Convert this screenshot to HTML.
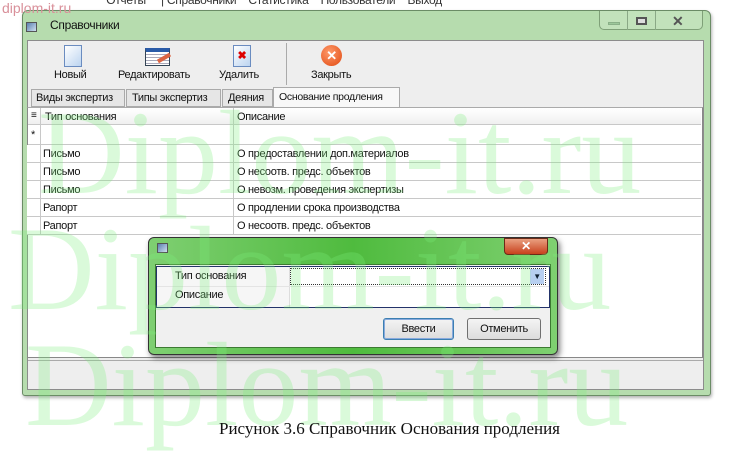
<!DOCTYPE html>
<html><head><meta charset="utf-8"><style>
*{margin:0;padding:0;box-sizing:border-box}
body{width:749px;height:447px;background:#fff;position:relative;overflow:hidden;font-family:"Liberation Sans",sans-serif;font-size:11px;letter-spacing:-0.3px;color:#111}
.a{position:absolute;white-space:nowrap}
.wm{position:absolute;font-family:"Liberation Serif",serif;font-size:120px;color:#7cf07c;opacity:.28;white-space:nowrap;letter-spacing:0;z-index:50;pointer-events:none}
.row{position:absolute;left:27px;width:674px;height:18px;border-bottom:1px solid #c8c8c8;background:#fff}
.row span{position:absolute;top:3px;white-space:nowrap}
.btn{position:absolute;height:22px;border:1px solid #707070;border-radius:3px;background:linear-gradient(#f4f4f4,#dcdcdc);text-align:center;line-height:20px;font-size:11px}
</style></head><body>
<div class="a" style="left:0;top:-7px;width:749px;height:14px;overflow:hidden;font-size:12px;color:#333">&nbsp;&nbsp;&nbsp;&nbsp;&nbsp;&nbsp;&nbsp;&nbsp;&nbsp;&nbsp;&nbsp;&nbsp;&nbsp;&nbsp;&nbsp;&nbsp;&nbsp;&nbsp;&nbsp;&nbsp;&nbsp;&nbsp;&nbsp;&nbsp;&nbsp;&nbsp;&nbsp;&nbsp;&nbsp;&nbsp;&nbsp;&nbsp;&nbsp;&nbsp;&nbsp;Отчеты &nbsp;&nbsp;&nbsp;&nbsp;| Справочники &nbsp;&nbsp;&nbsp;Статистика &nbsp;&nbsp;&nbsp;Пользователи &nbsp;&nbsp;&nbsp;Выход</div>
<div class="a" style="left:2px;top:0;font-size:14px;letter-spacing:0;color:#d9909a;z-index:60">diplom-it.ru</div>
<div class="a" style="left:22px;top:10px;width:689px;height:386px;background:#b6dcae;border:1px solid #6b8c66;border-radius:6px 6px 3px 3px;box-shadow:1px 2px 3px rgba(0,0,0,.3)"></div>
<div class="a" style="left:26px;top:22px;width:11px;height:10px;background:linear-gradient(135deg,#5a7fb0,#cfe0f0);border:1px solid #555"></div>
<div class="a" style="left:50px;top:18px;font-size:12px">Справочники</div>
<div class="a" style="left:599px;top:11px;width:104px;height:19px;border:1px solid #7fa078;border-top:none;border-radius:0 0 5px 5px;background:#c2e2bb"></div>
<div class="a" style="left:627px;top:11px;width:1px;height:19px;background:#8aa886"></div>
<div class="a" style="left:655px;top:11px;width:1px;height:19px;background:#8aa886"></div>
<div class="a" style="left:608px;top:22px;width:12px;height:3px;background:#9cc79a;border:1px solid #8ab088"></div>
<div class="a" style="left:636px;top:17px;width:11px;height:8px;border:2px solid #555;background:#ddd"></div>
<div class="a" style="left:672px;top:13px;font-size:14px;font-weight:bold;color:#555">✕</div>
<div class="a" style="left:27px;top:40px;width:677px;height:350px;background:#eeeeee;border:1px solid #8c8c8c"></div>
<div class="a" style="left:64px;top:45px;width:18px;height:22px;background:linear-gradient(135deg,#fff,#bcd4f0);border:1px solid #6a8cc0"></div>
<div class="a" style="left:54px;top:69px">Новый</div>
<div class="a" style="left:145px;top:48px;width:25px;height:18px;background:repeating-linear-gradient(#fff 0 2px,#aab 2px 3px);border:1px solid #345;border-top:4px solid #2a5ba8"></div>
<div class="a" style="left:157px;top:56px;width:14px;height:4px;background:#d64;transform:rotate(-30deg)"></div>
<div class="a" style="left:118px;top:69px">Редактировать</div>
<div class="a" style="left:233px;top:45px;width:18px;height:22px;background:linear-gradient(135deg,#fff,#bcd4f0);border:1px solid #6a8cc0;color:#d00;font-weight:bold;font-size:11px;text-align:center;line-height:20px">✖</div>
<div class="a" style="left:219px;top:69px">Удалить</div>
<div class="a" style="left:286px;top:43px;width:1px;height:42px;background:#aaa"></div>
<div class="a" style="left:321px;top:45px;width:21px;height:21px;border-radius:50%;background:radial-gradient(circle at 40% 35%,#ff9a6a,#e04810);color:#fff;text-align:center;line-height:21px;font-weight:bold;font-size:13px">✕</div>
<div class="a" style="left:311px;top:69px">Закрыть</div>
<div class="a" style="left:31px;top:89px;width:94px;height:18px;border:1px solid #aaa;background:#e6e6e6;padding:2px 4px">Виды экспертиз</div>
<div class="a" style="left:126px;top:89px;width:95px;height:18px;border:1px solid #aaa;background:#e6e6e6;padding:2px 5px">Типы экспертиз</div>
<div class="a" style="left:222px;top:89px;width:51px;height:18px;border:1px solid #aaa;background:#e6e6e6;padding:2px 5px">Деяния</div>
<div class="a" style="left:273px;top:87px;width:127px;height:21px;border:1px solid #aaa;border-bottom:none;background:#f8f8f8;padding:3px 5px;font-size:10.5px">Основание продления</div>
<div class="a" style="left:27px;top:107px;width:676px;height:251px;background:#fff;border:1px solid #888;border-top:1px solid #aaa"></div>
<div class="a" style="left:28px;top:108px;width:673px;height:17px;background:linear-gradient(#fff,#f0f0f0);border-bottom:1px solid #c8c8c8"></div>
<div class="a" style="left:233px;top:108px;width:1px;height:127px;background:#c8c8c8"></div>
<div class="a" style="left:40px;top:108px;width:1px;height:127px;background:#c8c8c8"></div>
<div class="a" style="left:31px;top:110px;font-size:10px">≡</div>
<div class="a" style="left:45px;top:111px">Тип основания</div>
<div class="a" style="left:237px;top:111px">Описание</div>
<div class="a" style="left:28px;top:126px;width:673px;height:19px;border-bottom:1px solid #c8c8c8"></div>
<div class="a" style="left:31px;top:129px">*</div>
<div class="row" style="top:145px"><span style="left:16px">Письмо</span><span style="left:210px">О предоставлении доп.материалов</span></div>
<div class="row" style="top:163px"><span style="left:16px">Письмо</span><span style="left:210px">О несоотв. предс. объектов</span></div>
<div class="row" style="top:181px"><span style="left:16px">Письмо</span><span style="left:210px">О невозм. проведения экспертизы</span></div>
<div class="row" style="top:199px"><span style="left:16px">Рапорт</span><span style="left:210px">О продлении срока производства</span></div>
<div class="row" style="top:217px"><span style="left:16px">Рапорт</span><span style="left:210px">О несоотв. предс. объектов</span></div>
<div class="a" style="left:40px;top:145px;width:1px;height:90px;background:#c8c8c8"></div>
<div class="a" style="left:233px;top:145px;width:1px;height:90px;background:#c8c8c8"></div>
<div class="a" style="left:28px;top:360px;width:675px;height:27px;background:#eee;border-top:1px solid #aaa"></div>
<div class="a" style="left:148px;top:237px;width:410px;height:118px;border-radius:6px;background:linear-gradient(90deg,#7fcf72,#4fbb3e 50%,#7fd071);border:1px solid #333;box-shadow:2px 3px 6px rgba(0,0,0,.5)"></div>
<div class="a" style="left:157px;top:243px;width:11px;height:10px;background:linear-gradient(135deg,#5a7fb0,#cfe0f0);border:1px solid #555"></div>
<div class="a" style="left:504px;top:238px;width:44px;height:17px;border-radius:0 0 4px 4px;background:linear-gradient(#e9a080,#c8401c);border:1px solid #6a2a18;color:#fff;text-align:center;font-weight:bold;font-size:12px;line-height:15px">✕</div>
<div class="a" style="left:155px;top:264px;width:396px;height:84px;background:#f0f0f0;border:1px solid #3c7a32"></div>
<div class="a" style="left:156px;top:266px;width:394px;height:42px;background:#fff;border:1px solid #23336a"></div>
<div class="a" style="left:157px;top:267px;width:132px;height:40px;background:#f6f6f6"></div>
<div class="a" style="left:289px;top:267px;width:1px;height:40px;background:#ddd"></div>
<div class="a" style="left:157px;top:286px;width:392px;height:1px;background:#e4e4e4"></div>
<div class="a" style="left:175px;top:270px">Тип основания</div>
<div class="a" style="left:175px;top:289px">Описание</div>
<div class="a" style="left:290px;top:268px;width:256px;height:17px;border:1px dotted #333"></div>
<div class="a" style="left:530px;top:269px;width:14px;height:15px;background:#b7cff0;font-size:8px;text-align:center;line-height:15px;color:#123">▼</div>
<div class="btn" style="left:383px;top:318px;width:71px;border-color:#3c7fb1;box-shadow:inset 0 0 0 1px #8ad">Ввести</div>
<div class="btn" style="left:467px;top:318px;width:74px">Отменить</div>
<div class="wm" style="left:38px;top:84px">Diplom-it.ru</div>
<div class="wm" style="left:8px;top:200px">Diplom-it.ru</div>
<div class="wm" style="left:25px;top:316px">Diplom-it.ru</div>
<div class="a" style="left:0;top:419px;width:749px;text-align:center;padding-left:30px;font-family:'Liberation Serif',serif;font-size:17px;letter-spacing:0;color:#111;z-index:70">Рисунок 3.6 Справочник Основания продления</div>
</body></html>
